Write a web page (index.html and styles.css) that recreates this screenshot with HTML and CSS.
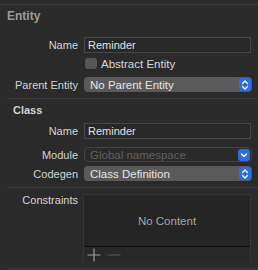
FILE: index.html
```html
<!DOCTYPE html>
<html lang="en">

<head>
  <meta charset="UTF-8" />
  <meta name="viewport" content="width=device-width, initial-scale=1.0" />
  <title>Entity Inspector</title>
  <link rel="stylesheet" href="styles.css">
</head>

<body>
  <div class="inspector">
    <div class="rule rule_full"></div>

    <!-- Entity section -->
    <h2 class="section_title">Entity</h2>

    <div class="row row_name">
      <label class="row_label">Name</label>
      <div class="textField">Reminder</div>
    </div>

    <div class="row row_check">
      <span class="row_label"></span>
      <div class="checkRow">
        <span class="checkBox"></span>
        <span>Abstract Entity</span>
      </div>
    </div>

    <div class="row row_popup">
      <label class="row_label">Parent Entity</label>
      <div class="popup">
        <span class="popup_text">No Parent Entity</span>
        <span class="popup_arrows">
          <svg width="12" height="14" viewBox="0 0 12 14">
            <path d="M3.5 5.5 L6 3 L8.5 5.5 M3.5 8.5 L6 11 L8.5 8.5" fill="none" stroke="#fff" stroke-width="1.3" stroke-linecap="round" stroke-linejoin="round" />
          </svg>
        </span>
      </div>
    </div>

    <div class="rule rule_sep"></div>

    <!-- Class section -->
    <h3 class="sub_title">Class</h3>

    <div class="row row_name2">
      <label class="row_label">Name</label>
      <div class="textField">Reminder</div>
    </div>

    <div class="row row_module">
      <label class="row_label">Module</label>
      <div class="popup popup_disabled">
        <span class="popup_text">Global namespace</span>
        <span class="popup_arrows">
          <svg width="12" height="12" viewBox="0 0 12 12">
            <path d="M3.5 5 L6 7.5 L8.5 5" fill="none" stroke="#fff" stroke-width="1.3" stroke-linecap="round" stroke-linejoin="round" />
          </svg>
        </span>
      </div>
    </div>

    <div class="row row_codegen">
      <label class="row_label">Codegen</label>
      <div class="popup">
        <span class="popup_text">Class Definition</span>
        <span class="popup_arrows">
          <svg width="12" height="14" viewBox="0 0 12 14">
            <path d="M3.5 5.5 L6 3 L8.5 5.5 M3.5 8.5 L6 11 L8.5 8.5" fill="none" stroke="#fff" stroke-width="1.3" stroke-linecap="round" stroke-linejoin="round" />
          </svg>
        </span>
      </div>
    </div>

    <div class="rule rule_sep"></div>

    <!-- Constraints -->
    <div class="row row_constraints">
      <label class="row_label">Constraints</label>
      <div class="listBox">
        <div class="listBox_content">No Content</div>
        <div class="listBox_bar">
          <svg width="14" height="14" viewBox="0 0 14 14">
            <path d="M7 0.5 V13.5 M0.5 7 H13.5" stroke="#9c9c9c" stroke-width="1.2" />
          </svg>
          <svg width="14" height="14" viewBox="0 0 14 14">
            <path d="M0.5 7 H13.5" stroke="#545454" stroke-width="1.2" />
          </svg>
        </div>
      </div>
    </div>

    <div class="rule rule_sep rule_bottom"></div>
  </div>
</body>

</html>
```

FILE: styles.css
```css
body {
  margin: 0;
  background-color: #2b2b2b;
  font-family: 'Liberation Sans', Arial, sans-serif;
  font-size: 11px;
  color: #d6d6d6;
}

.inspector {
  width: 258px;
  height: 270px;
  padding-top: 4px;
  box-sizing: border-box;
  overflow: hidden;
}

.rule {
  height: 1px;
  background-color: #3c3c3c;
}

.rule_sep {
  margin: 6px 0 0 7px;
}

.section_title {
  margin: 4px 0 0 7px;
  font-size: 12px;
  line-height: 14px;
  font-weight: bold;
  color: #9c9c9c;
}

.sub_title {
  margin: 5px 0 0 13px;
  font-size: 11px;
  line-height: 13px;
  font-weight: bold;
  color: #d2d2d2;
}

.row {
  display: grid;
  grid-template-columns: 78px 168px;
  column-gap: 6px;
  align-items: center;
}

.row_label {
  text-align: right;
  color: #d4d4d4;
}

.row_name {
  margin-top: 14px;
  height: 16px;
}

.row_check {
  margin-top: 4px;
  height: 13px;
}

.row_popup {
  margin-top: 7px;
  height: 15px;
}

.row_name2 {
  margin-top: 6px;
  height: 16px;
}

.row_module {
  margin-top: 8px;
  height: 15px;
}

.row_codegen {
  margin-top: 4px;
  height: 15px;
}

.row_constraints {
  margin-top: 6px;
  align-items: start;
  grid-template-columns: 78px 168px;
  column-gap: 5px;
}

.textField {
  box-sizing: border-box;
  width: 167px;
  height: 16px;
  padding-left: 3px;
  line-height: 14px;
  border: 1px solid #474747;
  background-color: #282828;
  color: #e2e2e2;
}

.checkRow {
  display: flex;
  align-items: center;
  gap: 4px;
  color: #d8d8d8;
  font-size: 11.5px;
}

.checkBox {
  width: 12px;
  height: 11px;
  margin-left: 1px;
  border-radius: 3px;
  background-color: #565656;
}

.popup {
  box-sizing: border-box;
  display: flex;
  align-items: center;
  justify-content: space-between;
  height: 15px;
  padding: 0 1px 0 6px;
  border-radius: 4px;
  background-color: #5a5a5a;
  color: #e4e4e4;
  font-size: 11.5px;
}

.popup_disabled {
  border: 1px solid #444444;
  background-color: #2b2b2b;
  color: #616161;
  padding-left: 5px;
}

.popup_arrows {
  display: flex;
  align-items: center;
  justify-content: center;
  width: 12px;
  height: 13px;
  border-radius: 3px;
  background-color: #2a6ee0;
}

.popup_disabled .popup_arrows {
  height: 12px;
}

.listBox {
  box-sizing: border-box;
  width: 168px;
  height: 68px;
  border: 1px solid #363636;
  background-color: #252525;
}

.listBox_content {
  height: 51px;
  border-bottom: 1px solid #0d0d0d;
  display: flex;
  align-items: center;
  justify-content: center;
  color: #a6a6a6;
  font-size: 11.5px;
}

.listBox_bar {
  display: flex;
  align-items: center;
  gap: 6px;
  height: 14px;
  padding: 1px 0 0 3px;
  background-color: #292929;
}
```
